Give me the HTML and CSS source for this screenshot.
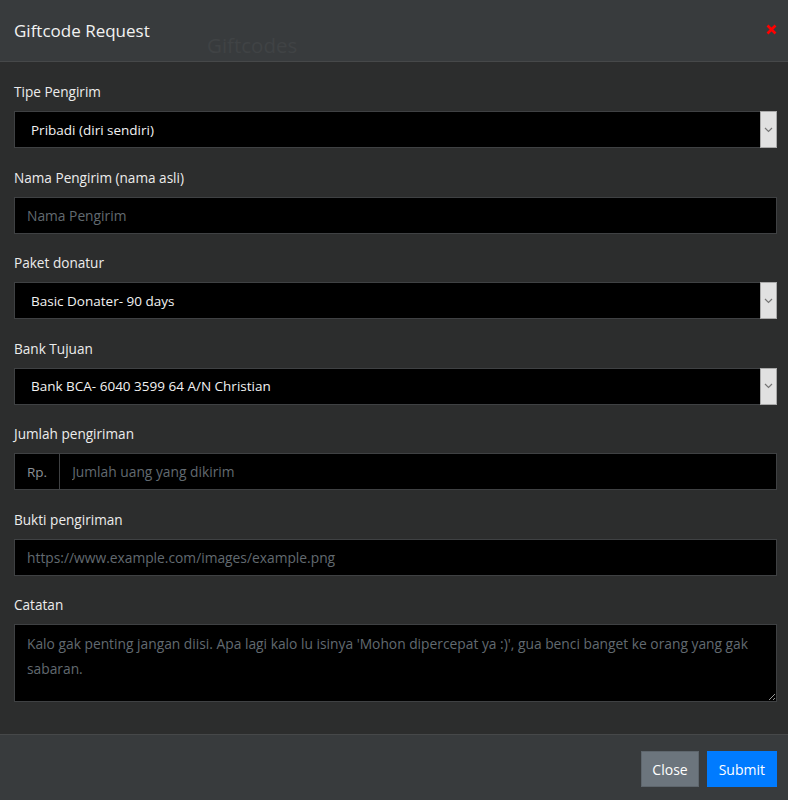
FILE: index.html
```html
<!DOCTYPE html>
<html lang="id">
<head>
<meta charset="UTF-8">
<meta name="viewport" content="width=device-width, initial-scale=1.0">
<title>Giftcode Request</title>
<link rel="stylesheet" href="styles.css">
</head>
<body>
  <div class="modal">
    <div class="modal-header">
      <h5 class="modal-title">Giftcode Request</h5>
      <span class="behind-title">Giftcodes</span>
      <button class="close-x" type="button">
        <svg width="11" height="11" viewBox="0 0 11 11"><path d="M1.5 1.5l8 8M9.5 1.5l-8 8" stroke="#f00" stroke-width="2.6"/></svg>
      </button>
    </div>

    <form class="modal-body">
      <div class="form-group">
        <label>Tipe Pengirim</label>
        <div class="select-wrap">
          <select class="form-control">
            <option>Pribadi (diri sendiri)</option>
          </select>
          <span class="select-arrow">
            <svg width="9" height="6" viewBox="0 0 9 6"><path d="M1 1l3.5 3.5L8 1" fill="none" stroke="#777" stroke-width="1.2"/></svg>
          </span>
        </div>
      </div>

      <div class="form-group">
        <label>Nama Pengirim (nama asli)</label>
        <input class="form-control" type="text" placeholder="Nama Pengirim">
      </div>

      <div class="form-group">
        <label>Paket donatur</label>
        <div class="select-wrap">
          <select class="form-control">
            <option>Basic Donater- 90 days</option>
          </select>
          <span class="select-arrow">
            <svg width="9" height="6" viewBox="0 0 9 6"><path d="M1 1l3.5 3.5L8 1" fill="none" stroke="#777" stroke-width="1.2"/></svg>
          </span>
        </div>
      </div>

      <div class="form-group">
        <label>Bank Tujuan</label>
        <div class="select-wrap">
          <select class="form-control">
            <option>Bank BCA- 6040 3599 64 A/N Christian</option>
          </select>
          <span class="select-arrow">
            <svg width="9" height="6" viewBox="0 0 9 6"><path d="M1 1l3.5 3.5L8 1" fill="none" stroke="#777" stroke-width="1.2"/></svg>
          </span>
        </div>
      </div>

      <div class="form-group">
        <label>Jumlah pengiriman</label>
        <div class="input-group">
          <span class="input-group-text">Rp.</span>
          <input class="form-control" type="text" placeholder="Jumlah uang yang dikirim">
        </div>
      </div>

      <div class="form-group">
        <label>Bukti pengiriman</label>
        <input class="form-control" type="text" placeholder="https://www.example.com/images/example.png">
      </div>

      <div class="form-group">
        <label>Catatan</label>
        <textarea class="form-control" rows="2" placeholder="Kalo gak penting jangan diisi. Apa lagi kalo lu isinya 'Mohon dipercepat ya :)', gua benci banget ke orang yang gak sabaran."></textarea>
      </div>
    </form>

    <div class="modal-footer">
      <button class="btn btn-secondary" type="button">Close</button>
      <button class="btn btn-primary" type="button">Submit</button>
    </div>
  </div>
</body>
</html>
```

FILE: styles.css
```css
body {
  margin: 0;
  background-color: #2c2d2d;
  font-family: "Open Sans", "Noto Sans", Arial, sans-serif;
  color: #e8e8e8;
}
.modal {
  width: 788px;
  height: 800px;
  display: flex;
  flex-direction: column;
  background-color: #2c2d2d;
}
.modal-header {
  position: relative;
  height: 62px;
  display: flex;
  align-items: center;
  justify-content: space-between;
  padding: 0 11px 0 14px;
  background-color: #383b3d;
  border-bottom: 1px solid #464849;
  box-sizing: border-box;
}
.modal-title {
  margin: 0;
  font-size: 17px;
  font-weight: 400;
  color: #f2f2f2;
}
.behind-title {
  position: absolute;
  left: 207px;
  top: 31px;
  font-size: 20.5px;
  color: #404345;
}
.close-x {
  display: flex;
  background: none;
  border: none;
  padding: 0;
  margin-top: -2px;
  cursor: pointer;
}
.modal-body {
  flex: 1;
  padding: 20px 11px 0 14px;
}
.form-group {
  margin-bottom: 19.5px;
}
label {
  display: block;
  font-size: 13.6px;
  line-height: 20px;
  margin-bottom: 9px;
  color: #ececec;
}
.form-control {
  display: block;
  width: 100%;
  height: 37px;
  box-sizing: border-box;
  padding: 0 12px;
  background-color: #000;
  border: 1px solid #3f4143;
  border-radius: 0;
  color: #f2f2f2;
  font-family: inherit;
  font-size: 13.8px;
  outline: none;
}
.form-control::placeholder {
  color: #626a70;
}
.select-wrap {
  position: relative;
}
.select-wrap select {
  appearance: none;
  padding-left: 16px;
  font-size: 13.5px;
}
.select-arrow {
  position: absolute;
  top: 0;
  right: 0;
  width: 17px;
  height: 37px;
  display: flex;
  align-items: center;
  justify-content: center;
  background-color: #e1e1e1;
  border: 1px solid #a9a9a9;
  box-sizing: border-box;
}
.input-group {
  display: flex;
}
.input-group-text {
  display: flex;
  align-items: center;
  padding: 0 12px;
  height: 37px;
  box-sizing: border-box;
  background-color: #000;
  border: 1px solid #3f4143;
  border-right: none;
  color: #8b9196;
  font-size: 13.5px;
}
.input-group .form-control {
  flex: 1;
}
textarea.form-control {
  height: 78px;
  padding: 6px 12px;
  line-height: 25px;
  resize: vertical;
}
.modal-footer {
  height: 66px;
  display: flex;
  justify-content: flex-end;
  align-items: flex-start;
  gap: 8px;
  padding: 16px 11px 0 0;
  box-sizing: border-box;
  background-color: #383b3d;
  border-top: 1px solid #464849;
}
.btn {
  height: 36px;
  padding: 0 12px;
  border: none;
  border-radius: 0;
  font-family: inherit;
  font-size: 14px;
  color: #fff;
  cursor: pointer;
}
.btn-secondary {
  padding: 0 10px;
  background-color: #6c757d;
  border: 1px solid #5e666d;
}
.btn-primary {
  background-color: #007bff;
}
```
